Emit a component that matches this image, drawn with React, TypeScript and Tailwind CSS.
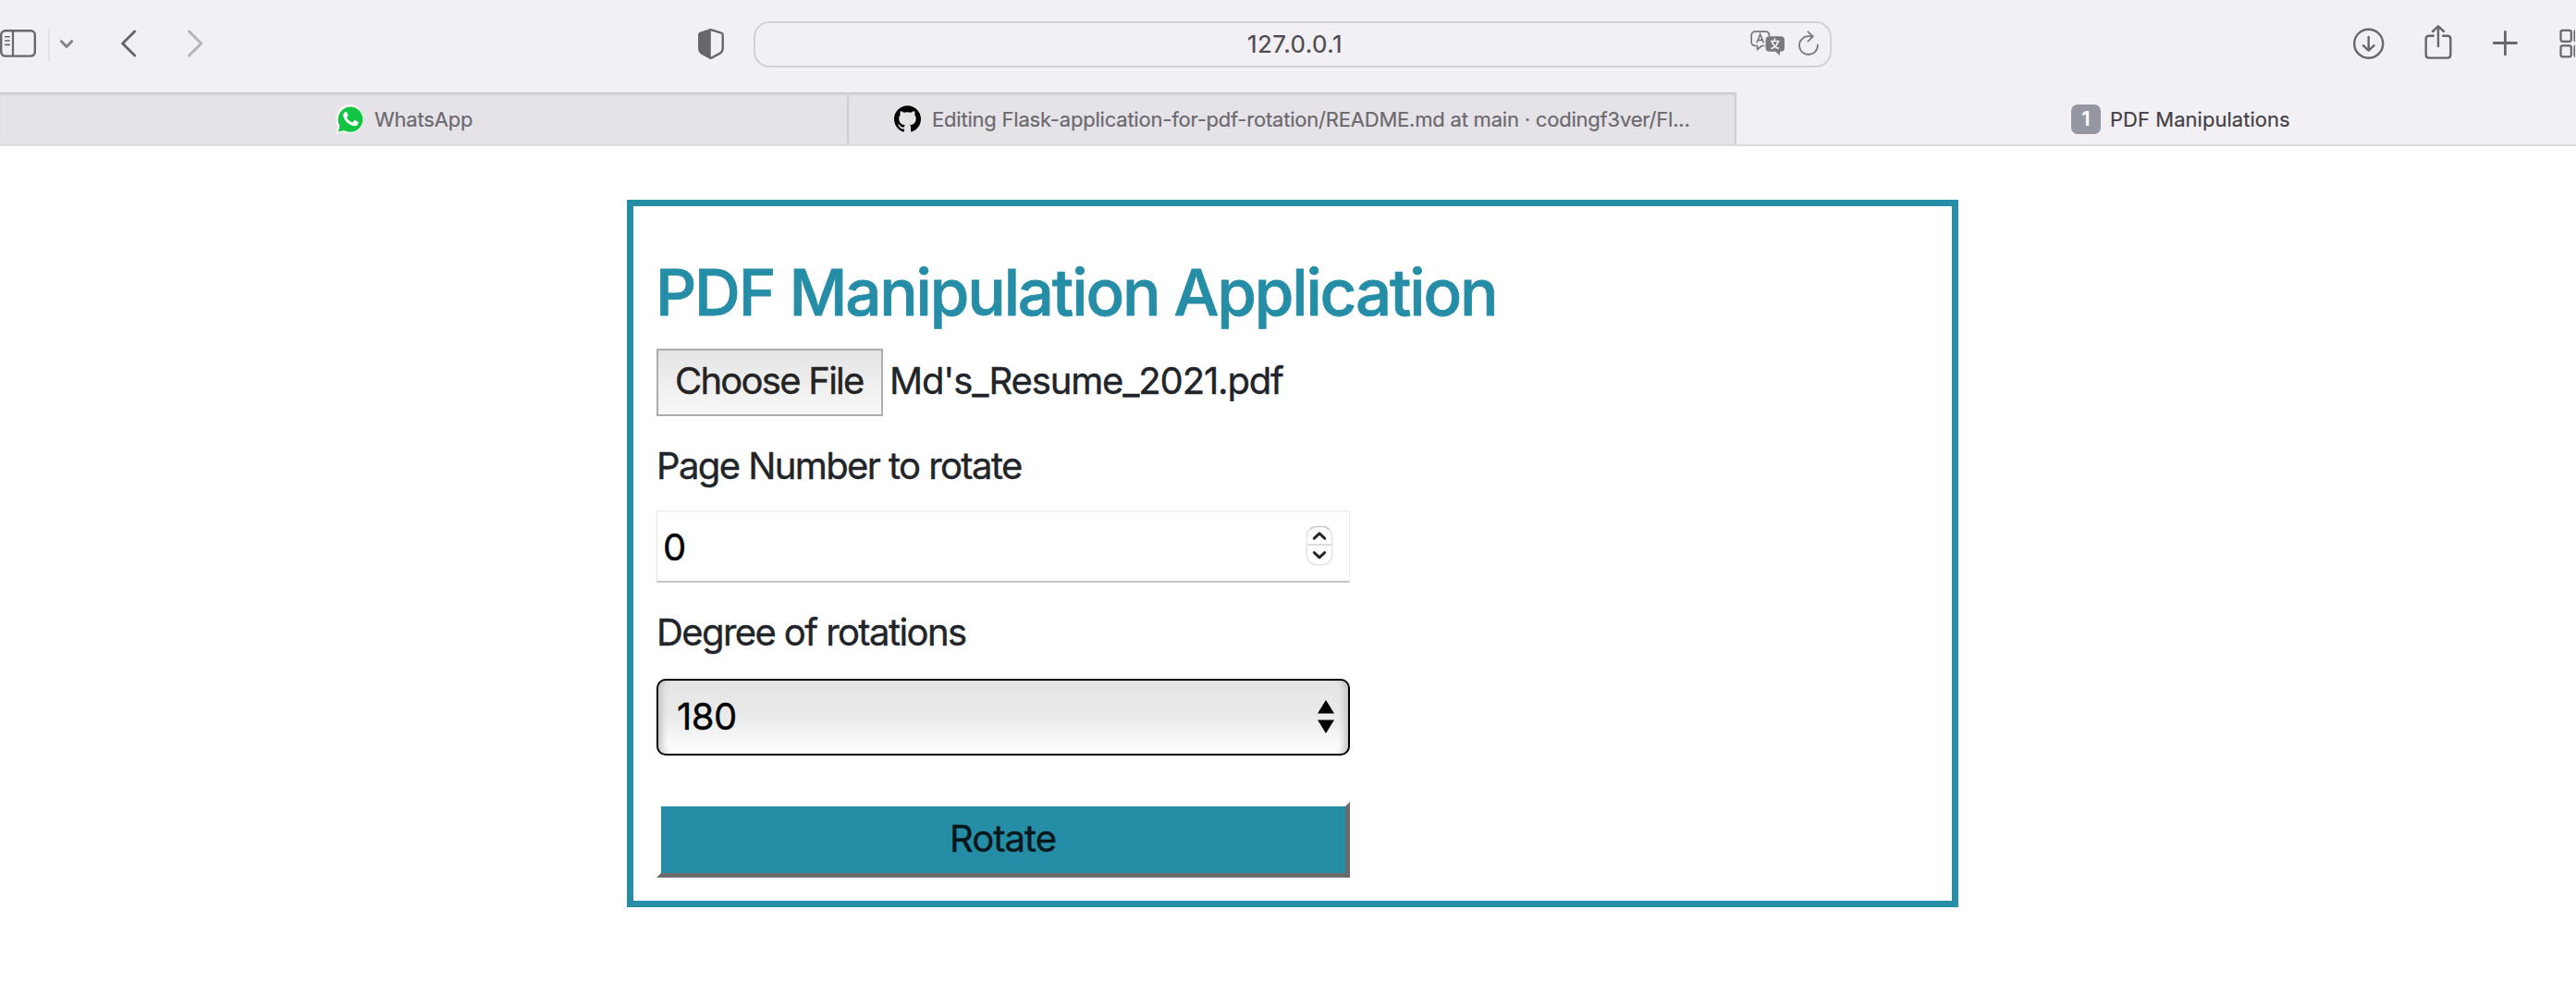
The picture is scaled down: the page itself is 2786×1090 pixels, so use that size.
import React from "react";
import { SiGithub } from "react-icons/si";

const ink = "#68666b";

function SidebarIcon() {
  return (
    <svg className="mt-[31px] h-8 w-10 shrink-0" viewBox="0 0 40 32" fill="none" stroke={ink}>
      <rect x="1.2" y="2.2" width="36.6" height="27.4" rx="4.5" strokeWidth="2.4" />
      <path d="M14 2v28" strokeWidth="2.2" />
      <path d="M5.6 8.7h4.6M5.6 13h4.6M5.6 17.4h4.6" strokeWidth="1.6" strokeLinecap="round" />
    </svg>
  );
}

function ShieldIcon() {
  return (
    <svg className="mt-[30px] ml-[535px] h-[34px] w-7 shrink-0" viewBox="0 0 28 34" fill="none">
      <path
        d="M13.8 2.2 25 5.6q1.7.6 1.7 2.2v14.4q0 3-2.6 5.2L13.8 33 3.6 27.4Q1.2 25.2 1.2 22.2V7.8Q1.2 6.2 2.8 5.6z"
        stroke={ink}
        strokeWidth="2.4"
        strokeLinejoin="round"
      />
      <path d="M13.8 2 2.6 5.6Q1 6.2 1 8v14.2q0 3 2.4 5.2L13.8 33z" fill={ink} />
    </svg>
  );
}

function TranslateIcon() {
  return (
    <svg className="h-7 w-[38px] shrink-0" viewBox="0 0 38 28" fill="none">
      <path
        d="M15.500 16.500h-3L7.600 20.600V16.500H5.400Q1.200 16.500 1.200 12.300V5.400Q1.200 1.200 5.400 1.200H16.200Q20.400 1.200 20.400 5.400V6"
        stroke="#7b797e"
        strokeWidth="1.7"
        strokeLinejoin="round"
      />
      <path d="M7 13.400 10.700 4l3.700 9.400M8.300 10.400h4.900" stroke="#7b797e" strokeWidth="1.6" />
      <path
        d="M20.600 6.300H33q4 0 4 4v8.400q0 4-4 4h-1v4.400l-4.900-4.400h-6.500q-4 0-4-4v-8.400q0-4 4-4z"
        fill="#7b797e"
      />
      <path
        d="M26.400 8.600v2.600M22 11.500h9.400M23.600 12c1 4 3.600 6.400 7.400 7.600M30 12c-1 4-3.800 6.400-7.800 7.600"
        stroke="#f2f0f5"
        strokeWidth="1.6"
      />
    </svg>
  );
}

function ReloadIcon() {
  return (
    <svg className="ml-[14px] h-7 w-[22px] shrink-0" viewBox="0 0 22 28" fill="none" stroke="#7b797e" strokeWidth="1.8" strokeLinecap="round" strokeLinejoin="round">
      <path d="M20.800 15.500A9.900 9.900 0 1 1 11 6.200h4.500" />
      <path d="M10.400 1.400 15.700 6.300 10.400 11.600" />
    </svg>
  );
}

function WhatsAppIcon() {
  return (
    <svg className="h-8 w-[31px] shrink-0" viewBox="0 0 31 32">
      <path d="M15.600 0A15 15.500 0 1 1 8.700 29.600L0 32l2.200-8.800A15.200 15.600 0 0 1 15.600 0z" fill="#f8fbf8" />
      <path d="M15.700 2.400A13.400 13.700 0 1 1 9.200 27.900L3 29.400l1.500-6.200A13.600 13.800 0 0 1 15.700 2.400z" fill="#13c443" />
      <path
        d="M9.600 8.600c1.200-1.300 2.300-.8 2.700.2l1 2.500c.3.800-.1 1.300-1 2.300-.3.400-.2.600.1 1.100 1.300 2.100 2.900 3.600 5.300 4.600.5.200.8.100 1.100-.3l1.200-1.500c.4-.5.8-.6 1.400-.3l2.400 1.200c.6.300.9.500.9.900 0 2.300-1.900 4.200-4.400 4-5.800-.6-11.400-5.900-12-10.700-.1-1.600.4-3 1.300-4z"
        fill="#fff"
      />
    </svg>
  );
}

function ToolbarActions() {
  return (
    <div className="ml-[563px] flex shrink-0">
      <svg className="mt-[29px] h-9 w-9 shrink-0" viewBox="0 0 36 36" fill="none" stroke={ink} strokeWidth="2.400" strokeLinecap="round" strokeLinejoin="round">
        <circle cx="17.700" cy="18.200" r="15.500" />
        <path d="M17.700 11v14.200M11.800 20.200l5.900 5.400 5.900-5.400" />
      </svg>
      <svg className="mt-[26px] ml-[41px] h-[39px] w-8 shrink-0" viewBox="0 0 32 39" fill="none" stroke={ink} strokeWidth="2.400" strokeLinecap="round" strokeLinejoin="round">
        <path d="M10.800 12.800H6q-3.300 0-3.300 3.300v17.200q0 3.300 3.300 3.300h20q3.300 0 3.300-3.300V16.100q0-3.300-3.300-3.300h-4.800" />
        <path d="M16 24V2.800M10 8l6-5.600L22 8" />
      </svg>
      <svg className="mt-8 ml-[42px] h-[29px] w-7 shrink-0" viewBox="0 0 28 29" fill="none" stroke={ink} strokeWidth="2.800" strokeLinecap="round">
        <path d="M14.400 2.400v24.500M2.200 14.500h24.400" />
      </svg>
      <svg className="mt-[31px] ml-[45px] h-8 w-[17px] shrink-0" viewBox="0 0 17 32" fill="none" stroke={ink} strokeWidth="2.200">
        <rect x="1.500" y="1.800" width="11.300" height="12" rx="2" />
        <rect x="1.500" y="18.300" width="11.300" height="12" rx="2" />
        <rect x="16.500" y="1.800" width="12" height="12" rx="2" />
        <rect x="16.500" y="18.300" width="12" height="12" rx="2" />
      </svg>
    </div>
  );
}

function Toolbar() {
  return (
    <div className="flex h-[100px] shrink-0 items-start overflow-hidden">
      <SidebarIcon />
      <div className="mt-[30px] ml-3 h-9 w-0.5 shrink-0 bg-[#e4e2e7]" />
      <svg className="mt-[42px] ml-[10px] h-3 w-4 shrink-0" viewBox="0 0 16 12" fill="none" stroke="#858289" strokeWidth="3" strokeLinecap="round" strokeLinejoin="round">
        <path d="m2.400 2.700 5.600 5.800 5.600-5.800" />
      </svg>
      <svg className="mt-8 ml-[50px] h-[30px] w-[18px] shrink-0" viewBox="0 0 18 30" fill="none" stroke={ink} strokeWidth="2.900" strokeLinecap="round" strokeLinejoin="round">
        <path d="M15.700 2 2.600 15l13.100 13" />
      </svg>
      <svg className="mt-8 ml-[54px] h-[30px] w-[18px] shrink-0" viewBox="0 0 18 30" fill="none" stroke="#b5b2b8" strokeWidth="2.900" strokeLinecap="round" strokeLinejoin="round">
        <path d="m2.600 2 13.100 13L2.600 28" />
      </svg>
      <ShieldIcon />
      <div className="mt-[23px] ml-8 flex h-[50px] w-[1166px] shrink-0 items-center rounded-[17px] border-2 border-[#d4d2d8] pr-3">
        <span className="ml-[532px] w-[108px] pb-px text-[26px] leading-[46px] tracking-[0.45px] text-[#4c4b4e] [-webkit-text-stroke:0.2px]">127.0.0.1</span>
        <div className="ml-auto flex pb-[3px]">
          <TranslateIcon />
          <ReloadIcon />
        </div>
      </div>
      <ToolbarActions />
    </div>
  );
}

function TabStrip() {
  const idle =
    "flex h-full items-center border-r-2 border-[#d0ced4] bg-[#e5e3e8] text-[#6b696f] shadow-[inset_0_1px_0_#bfbdc4,inset_0_3px_3px_-1px_#cfcdd3]";
  return (
    <div className="flex h-[58px] shrink-0 border-b-2 border-[#dcdbdf] text-[22px] leading-7 [-webkit-text-stroke:0.2px]">
      <div className={idle + " w-[918px] shrink-0 pt-px pl-[363px]"}>
        <WhatsAppIcon />
        <span className="ml-[11px] tracking-[-0.18px]">WhatsApp</span>
      </div>
      <div className={idle + " w-[960px] shrink-0 pt-px pl-[49px]"}>
        <SiGithub className="size-[29px] shrink-0 text-black" />
        <span className="ml-3 tracking-[-0.21px] whitespace-nowrap">
          Editing Flask-application-for-pdf-rotation/README.md at main · codingf3ver/Fl...
        </span>
      </div>
      <div className="flex items-center pt-[2px] pl-[362px] text-[#434146]">
        <span className="flex size-8 items-center justify-center rounded-[7px] bg-[#9496a1] text-[21px] font-semibold text-white">1</span>
        <span className="ml-[10px] tracking-[0.03px]">PDF Manipulations</span>
      </div>
    </div>
  );
}

function Stepper() {
  return (
    <div className="mb-0.5 flex h-[42px] w-7 flex-col overflow-hidden rounded-[11px] border border-[#e2e2e2] border-t-[#bdbdbd] bg-white shadow-[0_0_2px_#d8d8d8]">
      <svg className="h-5 w-full border-b-2 border-[#dcdcdc]" viewBox="0 0 26 18" fill="none" stroke="#262626" strokeWidth="3" strokeLinecap="round" strokeLinejoin="round">
        <path d="m7.300 12.200 5.700-5.400 5.700 5.400" />
      </svg>
      <svg className="h-5 w-full" viewBox="0 0 26 20" fill="none" stroke="#262626" strokeWidth="3" strokeLinecap="round" strokeLinejoin="round">
        <path d="m7.300 7.500 5.700 5.400 5.700-5.400" />
      </svg>
    </div>
  );
}

export default function App() {
  return (
    <div className="flex h-[1090px] w-[2786px] flex-col overflow-hidden bg-white font-['Inter',sans-serif]">
      <header className="flex shrink-0 flex-col bg-[#f2f0f5]">
        <Toolbar />
        <TabStrip />
      </header>
      <main className="mt-[58px] ml-[678px] flex h-[765px] w-[1440px] flex-col border-[7px] border-[#268da7] px-[25px] pt-[51px] text-[40px] leading-[60px] text-[#212529] [-webkit-text-stroke:0.4px]">
        <h1 className="-ml-px text-[69px] leading-[84px] font-medium tracking-[-2.17px] whitespace-nowrap text-[#268da7] [-webkit-text-stroke:0.8px]">
          PDF Manipulation Application
        </h1>
        <div className="mt-[19px] flex h-[73px] items-center">
          <button className="flex h-full w-[245px] items-center border-2 border-[#adadad] bg-linear-to-b from-[#e4e4e4] to-[#f8f8f8] pb-1 pl-[18px] tracking-[-1.75px] whitespace-nowrap text-[#242424]">
            Choose File
          </button>
          <span className="ml-[7px] pb-1 tracking-[-1.15px]">Md's_Resume_2021.pdf</span>
        </div>
        <label className="mt-6 tracking-[-1.59px]">Page Number to rotate</label>
        <div className="mt-[18px] flex h-[78px] w-[750px] items-center justify-between border border-b-2 border-[#e8e8e8] border-b-[#c4c4c4] pr-[18px] pl-1.5 text-black">
          <span className="pt-0.5">0</span>
          <Stepper />
        </div>
        <label className="mt-6 tracking-[-1.59px]">Degree of rotations</label>
        <div className="mt-5 flex h-[83px] w-[750px] items-center justify-between rounded-[10px] border-2 border-black bg-linear-to-b from-[#e4e4e4] via-[#ebebeb] to-white pr-[15px] pb-0.5 pl-5 text-black shadow-[inset_9px_0_7px_-5px_#c4c4c4,inset_-9px_0_7px_-5px_#c4c4c4]">
          <span className="tracking-[-0.5px]">180</span>
          <svg className="h-9 w-[18px]" viewBox="0 0 18 36">
            <path d="M9 0l9 14.500H0zM0 21.500h18L9 36z" fill="#000" />
          </svg>
        </div>
        <button className="mt-[50px] flex h-[82px] w-[750px] items-center justify-center border-[5px] border-t-white border-r-[#6b6b6b] border-b-[#6b6b6b] border-l-white bg-[#268da7] pr-px pb-[3px] tracking-[-1px] text-[#06171b]">
          Rotate
        </button>
      </main>
    </div>
  );
}
